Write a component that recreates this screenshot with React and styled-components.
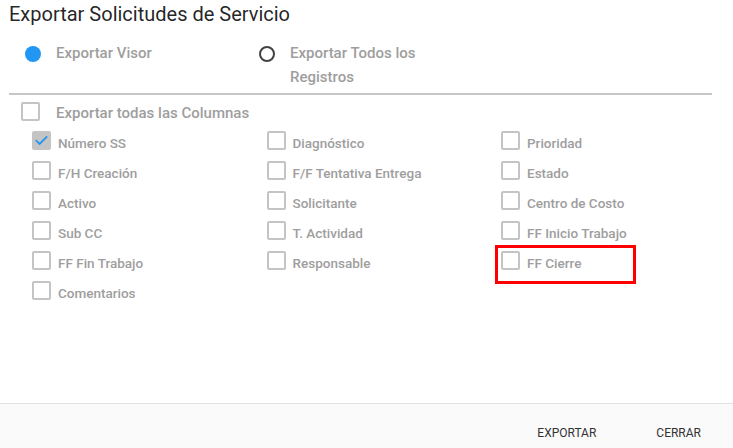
import React from "react";
import styled, { createGlobalStyle } from "styled-components";

const GlobalStyle = createGlobalStyle`
  html, body { margin: 0; padding: 0; background: #ffffff; }
  body { font-family: Roboto, "Noto Sans", "Liberation Sans", sans-serif; }
  *, *::before, *::after { box-sizing: border-box; }
`;

const Dialog = styled.div`
  width: 733px;
  height: 448px;
  display: flex;
  flex-direction: column;
  background: #ffffff;
  overflow: hidden;
`;

const Title = styled.h2`
  margin: 0;
  padding: 3px 9px 0;
  font-size: 20px;
  line-height: 22px;
  font-weight: 400;
  color: rgba(0, 0, 0, 0.87);
`;

const RadioGroup = styled.div`
  display: flex;
  margin-top: 16px;
  padding-left: 25px;
`;

const RadioItem = styled.label`
  display: flex;
  align-items: flex-start;
  gap: 15px;
  width: 234px;
`;

const RadioMark = styled.span`
  flex: none;
  width: 16px;
  height: 16px;
  margin-top: 5px;
  border-radius: 50%;
  border: ${(p) => (p.$on ? "none" : "2px solid #424242")};
  background: ${(p) => (p.$on ? "#2196f3" : "transparent")};
`;

const Label = styled.span`
  font-size: ${(p) => (p.$small ? "13.5px" : "15px")};
  line-height: 24px;
  font-weight: 500;
  color: #9e9e9e;
  width: ${(p) => p.$width || "auto"};
  white-space: ${(p) => (p.$width ? "normal" : "nowrap")};
`;

const Divider = styled.hr`
  margin: 4px 21px 0 9px;
  border: none;
  height: 2px;
  background: #c6c6c6;
`;

const SelectAll = styled.label`
  display: flex;
  align-items: flex-start;
  gap: 16px;
  margin-top: 6px;
  padding-left: 21px;
  height: 30px;
`;

const Box = styled.span`
  flex: none;
  width: 19px;
  height: 19px;
  margin-top: ${(p) => p.$offset || 0}px;
  border: 2px solid #c4c4c4;
  border-radius: 2px;
  background: ${(p) => (p.$checked ? "#c4c4c4" : "transparent")};
  display: flex;
  align-items: center;
  justify-content: center;
`;

const Grid = styled.div`
  display: grid;
  grid-template-columns: repeat(3, 234.5px);
  grid-auto-rows: 30px;
  padding-left: 32px;
`;

const Cell = styled.label`
  position: relative;
  display: flex;
  align-items: flex-start;
  gap: 7px;
  ${(p) =>
    p.$highlight &&
    `
    &::after {
      content: "";
      position: absolute;
      left: -6px;
      top: -6px;
      width: 141px;
      height: 39px;
      border: 3px solid #ff0000;
    }
  `}
`;

const Footer = styled.div`
  margin-top: auto;
  height: 45px;
  border-top: 1px solid #e2e2e2;
  background: #fafafa;
  display: flex;
  justify-content: flex-end;
  align-items: center;
  padding-right: 16px;
  gap: 28px;
`;

const Button = styled.button`
  border: none;
  background: transparent;
  font-family: inherit;
  font-size: 12px;
  font-weight: 400;
  color: #333333;
  text-transform: uppercase;
  padding: 8px 16px;
  margin-top: 14px;
  cursor: pointer;
`;

const Check = () => (
  <svg width="15" height="15" viewBox="0 0 24 24">
    <path
      d="M4 12.5l5 5L20 6.5"
      fill="none"
      stroke="#2196f3"
      strokeWidth="3"
      strokeLinecap="square"
    />
  </svg>
);

const columns = [
  { label: "Número SS", checked: true },
  { label: "Diagnóstico" },
  { label: "Prioridad" },
  { label: "F/H Creación" },
  { label: "F/F Tentativa Entrega" },
  { label: "Estado" },
  { label: "Activo" },
  { label: "Solicitante" },
  { label: "Centro de Costo" },
  { label: "Sub CC" },
  { label: "T. Actividad" },
  { label: "FF Inicio Trabajo" },
  { label: "FF Fin Trabajo" },
  { label: "Responsable" },
  { label: "FF Cierre", highlight: true },
  { label: "Comentarios" },
];

export default function App() {
  return (
    <>
      <GlobalStyle />
      <Dialog>
        <Title>Exportar Solicitudes de Servicio</Title>
        <RadioGroup>
          <RadioItem>
            <RadioMark $on />
            <Label>Exportar Visor</Label>
          </RadioItem>
          <RadioItem>
            <RadioMark />
            <Label $width="140px">Exportar Todos los Registros</Label>
          </RadioItem>
        </RadioGroup>
        <Divider />
        <SelectAll>
          <Box $offset={1} />
          <Label>Exportar todas las Columnas</Label>
        </SelectAll>
        <Grid>
          {columns.map((c) => (
            <Cell key={c.label} $highlight={c.highlight}>
              <Box $checked={c.checked}>{c.checked && <Check />}</Box>
              <Label $small>{c.label}</Label>
            </Cell>
          ))}
        </Grid>
        <Footer>
          <Button>Exportar</Button>
          <Button>Cerrar</Button>
        </Footer>
      </Dialog>
    </>
  );
}
